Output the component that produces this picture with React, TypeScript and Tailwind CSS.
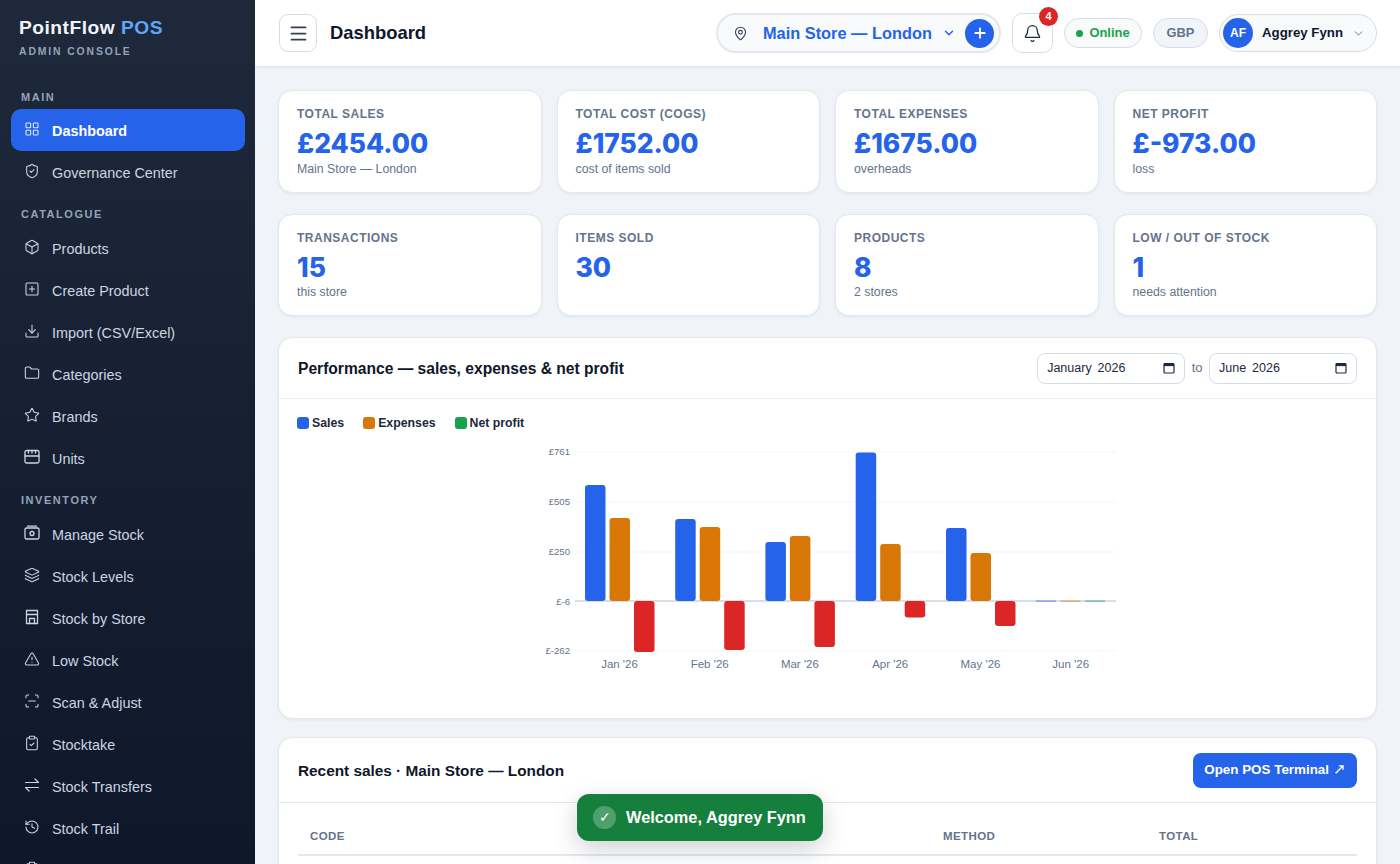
import {
  Bell,
  Box,
  ChevronDown,
  ClipboardCheck,
  Download,
  Folder,
  History,
  Layers,
  LayoutGrid,
  Menu,
  MapPin,
  Plus,
  ScanLine,
  ShieldCheck,
  SquarePlus,
  Star,
  TriangleAlert,
} from "lucide-react";
import type { ReactNode } from "react";

const ic = { size: 18, strokeWidth: 1.6 };

function UnitsIcon() {
  return (
    <svg width="16" height="16" viewBox="0 0 16 16" fill="none" stroke="currentColor" strokeWidth="1.3" strokeLinecap="round">
      <rect x="1" y="1.5" width="14" height="12.5" rx="1.5" />
      <path d="M1 7h14M4.5 1.5v2.5M8 1.5v2.5M11.5 1.5v2.5" />
    </svg>
  );
}

function CashIcon() {
  return (
    <svg width="16" height="16" viewBox="0 0 16 16" fill="none" stroke="currentColor" strokeWidth="1.3" strokeLinecap="round">
      <rect x="1" y="3" width="14" height="11" rx="1.5" />
      <circle cx="8" cy="8.5" r="2" />
      <path d="M3.5 1.2h9" />
    </svg>
  );
}

function StoreIcon() {
  return (
    <svg width="16" height="16" viewBox="0 0 16 16" fill="none" stroke="currentColor" strokeWidth="1.3" strokeLinecap="round" strokeLinejoin="round">
      <path d="M2.5 1.5h11v13h-11z" />
      <path d="M2.5 5.5h11M5.5 14.5V9.5h5v5" />
    </svg>
  );
}

function TransferIcon() {
  return (
    <svg width="16" height="16" viewBox="0 0 16 16" fill="none" stroke="currentColor" strokeWidth="1.2" strokeLinecap="round" strokeLinejoin="round">
      <path d="M1.5 5.5h13L11 2" />
      <path d="M14.5 10.5h-13L5 14" />
    </svg>
  );
}

function CalendarIcon() {
  return (
    <svg width="12" height="12" viewBox="0 0 12 12" fill="none">
      <rect x="1" y="1.5" width="10" height="9.5" rx="1" stroke="#1e293b" strokeWidth="1.2" />
      <rect x="1" y="1.5" width="10" height="2.6" fill="#1e293b" />
    </svg>
  );
}

type Item = { label: string; icon: ReactNode; active?: boolean };

const sections: { title: string; first?: boolean; items: Item[] }[] = [
  {
    title: "MAIN",
    first: true,
    items: [
      { label: "Dashboard", icon: <LayoutGrid {...ic} />, active: true },
      { label: "Governance Center", icon: <ShieldCheck {...ic} /> },
    ],
  },
  {
    title: "CATALOGUE",
    items: [
      { label: "Products", icon: <Box {...ic} /> },
      { label: "Create Product", icon: <SquarePlus {...ic} /> },
      { label: "Import (CSV/Excel)", icon: <Download {...ic} /> },
      { label: "Categories", icon: <Folder {...ic} /> },
      { label: "Brands", icon: <Star {...ic} /> },
      { label: "Units", icon: <UnitsIcon /> },
    ],
  },
  {
    title: "INVENTORY",
    items: [
      { label: "Manage Stock", icon: <CashIcon /> },
      { label: "Stock Levels", icon: <Layers {...ic} /> },
      { label: "Stock by Store", icon: <StoreIcon /> },
      { label: "Low Stock", icon: <TriangleAlert {...ic} /> },
      { label: "Scan & Adjust", icon: <ScanLine {...ic} /> },
      { label: "Stocktake", icon: <ClipboardCheck {...ic} /> },
      { label: "Stock Transfers", icon: <TransferIcon /> },
      { label: "Stock Trail", icon: <History {...ic} /> },
    ],
  },
];

const statsTop = [
  { label: "TOTAL SALES", value: "£2454.00", sub: "Main Store — London" },
  { label: "TOTAL COST (COGS)", value: "£1752.00", sub: "cost of items sold" },
  { label: "TOTAL EXPENSES", value: "£1675.00", sub: "overheads" },
  { label: "NET PROFIT", value: "£-973.00", sub: "loss" },
];

const statsBottom = [
  { label: "TRANSACTIONS", value: "15", sub: "this store" },
  { label: "ITEMS SOLD", value: "30", sub: "" },
  { label: "PRODUCTS", value: "8", sub: "2 stores" },
  { label: "LOW / OUT OF STOCK", value: "1", sub: "needs attention" },
];

// svg is placed so x = page x - 540, y = page y - 440
const bars = [
  { month: "Jan '26", cx: 79.5, sales: 485, exp: 518, net: 652 },
  { month: "Feb '26", cx: 169.7, sales: 519, exp: 527, net: 650 },
  { month: "Mar '26", cx: 259.9, sales: 542, exp: 536, net: 647 },
  { month: "Apr '26", cx: 350.2, sales: 452.5, exp: 544, net: 617.5 },
  { month: "May '26", cx: 440.5, sales: 528, exp: 553, net: 626 },
];

const ticks = [
  { y: 452, label: "£761" },
  { y: 502, label: "£505" },
  { y: 552, label: "£250" },
  { y: 651, label: "£-262" },
];

function Chart() {
  return (
    <svg width="580" height="240" viewBox="0 0 580 240" className="block" fontFamily="'Liberation Sans', sans-serif">
      {ticks.map((t) => (
        <g key={t.label}>
          <line x1="35" x2="576" y1={t.y - 440} y2={t.y - 440} stroke="#f1f5f9" strokeWidth="1" />
          <text x="30" y={t.y - 437} textAnchor="end" fontSize="9.6" fill="#64748b">
            {t.label}
          </text>
        </g>
      ))}
      <line x1="35" x2="576" y1="161" y2="161" stroke="#cbd5e1" strokeWidth="1.5" />
      <text x="30" y="164.5" textAnchor="end" fontSize="9.6" fill="#64748b">
        £-6
      </text>
      {bars.map((b) => (
        <g key={b.month}>
          <rect x={b.cx - 34.5} y={b.sales - 440} width="20.5" height={601 - b.sales} rx="3" fill="#2563eb" />
          <rect x={b.cx - 10} y={b.exp - 440} width="20.5" height={601 - b.exp} rx="3" fill="#d97706" />
          <rect x={b.cx + 14.5} y="161" width="20.5" height={b.net - 601} rx="3" fill="#dc2626" />
          <text x={b.cx} y="228" textAnchor="middle" fontSize="11.5" fill="#64748b">
            {b.month}
          </text>
        </g>
      ))}
      <rect x="496" y="160.5" width="20" height="1.2" fill="#2563eb" opacity="0.6" />
      <rect x="520.5" y="160.5" width="20" height="1.2" fill="#d97706" opacity="0.6" />
      <rect x="545" y="160.5" width="20" height="1.2" fill="#16a34a" opacity="0.6" />
      <text x="530.7" y="228" textAnchor="middle" fontSize="11.5" fill="#64748b">
        Jun '26
      </text>
    </svg>
  );
}

function StatCard({ label, value, sub, tight }: { label: string; value: string; sub: string; tight?: boolean }) {
  return (
    <div className={`rounded-[14px] border border-[#e2e8f0] bg-white px-[18px] pt-[15px] shadow-[0_1px_3px_rgba(15,23,42,0.06)] ${tight ? "pb-[15px]" : "pb-[15px]"}`}>
      <div className="text-[12px] leading-4 font-bold tracking-[0.5px] text-[#64748b]">{label}</div>
      <div className="mt-[3px] text-[26.4px] leading-[36px] font-extrabold text-[#2563eb] font-['Inter',sans-serif]">{value}</div>
      {sub && <div className={`text-[12.3px] leading-4 text-[#64748b] ${tight ? "-mt-px" : "mt-0"}`}>{sub}</div>}
    </div>
  );
}

function Sidebar() {
  return (
    <aside className="h-full w-[255px] shrink-0 overflow-hidden bg-gradient-to-b from-[#1e293b] to-[#0f172a]">
      <div className="px-[19px] pt-[17px]">
        <div className="text-[19.2px] leading-[22px] font-bold tracking-[0.5px] text-[#f1f5f9]">
          PointFlow <span className="text-[#60a5fa]">POS</span>
        </div>
        <div className="mt-[6px] text-[10.4px] leading-[14px] font-bold tracking-[0.18em] text-[#94a3b8]">ADMIN CONSOLE</div>
      </div>
      <nav className="pt-[31px] pr-[10px] pl-[11px]">
        {sections.map((s) => (
          <div key={s.title}>
            <div className={`px-2.5 text-[11px] leading-[14px] font-bold tracking-[0.14em] text-[#94a3b8] ${s.first ? "pb-[5px]" : "pt-[14px] pb-1.5"}`}>
              {s.title}
            </div>
            {s.items.map((i) => (
              <div
                key={i.label}
                className={`flex h-[42px] items-center gap-3 rounded-[10px] pl-[13px] text-[14.4px] ${i.active ? "bg-[#2563eb] font-bold text-white" : "text-[#cbd5e1]"}`}
              >
                <span className={`flex w-4 justify-center ${i.active ? "text-[#dbeafe]" : "text-[#cbd5e1]"} -translate-y-px`}>{i.icon}</span>
                <span className="pt-[3px]">{i.label}</span>
              </div>
            ))}
          </div>
        ))}
        <div className="flex h-[42px] items-center pl-[13px] text-[#cbd5e1]">
          <span className="flex w-4 justify-center -translate-y-px">
            <ClipboardCheck {...ic} />
          </span>
        </div>
      </nav>
    </aside>
  );
}

function Header() {
  return (
    <header className="flex h-[67px] shrink-0 items-center justify-between border-b border-[#e2e8f0] bg-white px-[23px] shadow-[0_1px_3px_rgba(15,23,42,0.04)]">
      <div className="ml-px flex items-center gap-[13px]">
        <button className="flex h-[38px] w-[38px] items-center justify-center rounded-[9px] border border-[#d5dde8] text-[#334155]">
          <Menu size={21} strokeWidth={2} />
        </button>
        <div className="text-[18.4px] font-bold text-[#0f172a]">Dashboard</div>
      </div>
      <div className="flex items-center gap-[11px]">
        <div className="flex h-10 w-[285px] items-center rounded-full border-2 border-[#e2e8f0] bg-[#f8fafc] pr-[5px] pl-[15px]">
          <MapPin size={15} strokeWidth={1.75} className="text-[#334155]" />
          <span className="ml-[15px] text-[16.35px] font-bold whitespace-nowrap text-[#2563eb]">Main Store — London</span>
          <ChevronDown size={14} strokeWidth={2.5} className="ml-[10px] text-[#2563eb]" />
          <span className="ml-auto flex h-[29px] w-[29px] items-center justify-center rounded-full bg-[#2563eb] text-white">
            <Plus size={16} strokeWidth={2.75} />
          </span>
        </div>
        <div className="relative flex h-10 w-[41px] items-center justify-center rounded-[10px] border border-[#d5dde8] bg-white text-[#1e293b]">
          <Bell size={19} strokeWidth={1.6} />
          <span className="absolute -top-[7px] -right-[6px] flex h-[19px] w-[19px] items-center justify-center rounded-full bg-[#dc2626] text-[11px] font-bold text-white">4</span>
        </div>
        <div className="flex h-[30px] w-[78px] items-center justify-center gap-[6px] rounded-full border border-[#d5dde8] bg-[#f8fafc] text-[12.9px] font-bold text-[#16a34a]">
          <span className="h-[7px] w-[7px] rounded-full bg-[#16a34a]" />
          Online
        </div>
        <div className="flex h-[30px] w-[55px] items-center justify-center rounded-full border border-[#d5dde8] bg-[#f1f5f9] text-[12.9px] font-bold text-[#64748b]">GBP</div>
        <div className="flex h-[38px] w-[158px] items-center rounded-full border border-[#d5dde8] bg-[#f8fafc] pl-[3px]">
          <span className="flex h-[30px] w-[30px] items-center justify-center rounded-full bg-[#2563eb] text-[12px] font-bold text-white">AF</span>
          <span className="ml-[9px] text-[13.25px] font-bold text-[#0f172a]">Aggrey Fynn</span>
          <ChevronDown size={13} strokeWidth={1.75} className="ml-[9px] text-[#64748b]" />
        </div>
      </div>
    </header>
  );
}

function MonthField({ month }: { month: string }) {
  return (
    <div className="flex h-[31px] w-[148px] items-center justify-between rounded-lg border border-[#d5dde8] bg-white px-[9px] text-[12.5px] text-[#1e293b]">
      <span className="[word-spacing:2.5px]">{month}</span>
      <CalendarIcon />
    </div>
  );
}

export default function App() {
  return (
    <div className="relative flex h-screen overflow-hidden bg-[#f0f4f9] font-['Liberation_Sans',Arial,sans-serif]">
      <Sidebar />
      <main className="flex min-w-0 flex-1 flex-col overflow-hidden">
        <Header />
        <div className="flex flex-col gap-[21px] px-[23px] pt-[23px]">
          <div className="grid grid-cols-4 gap-[15px]">
            {statsTop.map((s) => (
              <StatCard key={s.label} {...s} />
            ))}
          </div>
          <div className="grid grid-cols-4 gap-[15px]">
            {statsBottom.map((s) => (
              <StatCard key={s.label} {...s} tight />
            ))}
          </div>
          <section className="-mb-[3px] rounded-[14px] border border-[#e2e8f0] bg-white shadow-[0_1px_3px_rgba(15,23,42,0.06)]">
            <div className="flex h-[61px] items-center justify-between border-b border-[#eef2f7] px-[19px]">
              <h2 className="pt-0.5 text-[15.6px] font-bold text-[#0f172a]">Performance — sales, expenses &amp; net profit</h2>
              <div className="flex items-center gap-[6.5px] text-[13px] text-[#64748b]">
                <MonthField month="January 2026" />
                <span>to</span>
                <MonthField month="June 2026" />
              </div>
            </div>
            <div className="h-[319px] pt-[15px]">
              <div className="flex gap-[19px] pl-[18px] text-[12.3px] font-bold text-[#1e293b]">
                <span className="flex items-center gap-[3px]"><i className="h-3 w-3 rounded-[3px] bg-[#2563eb]" />Sales</span>
                <span className="flex items-center gap-[3px]"><i className="h-3 w-3 rounded-[3px] bg-[#d97706]" />Expenses</span>
                <span className="flex items-center gap-[3px]"><i className="h-3 w-3 rounded-[3px] bg-[#16a34a]" />Net profit</span>
              </div>
              <div className="flex justify-center pt-2 pl-1">
                <Chart />
              </div>
            </div>
          </section>
          <section className="h-[200px] rounded-[14px] border border-[#e2e8f0] bg-white shadow-[0_1px_3px_rgba(15,23,42,0.06)]">
            <div className="flex h-[65px] items-center justify-between border-b border-[#e2e8f0] px-[19px]">
              <h2 className="pt-0.5 text-[15.35px] font-bold text-[#0f172a]">Recent sales · Main Store — London</h2>
              <button className="h-[35px] w-[164px] rounded-lg bg-[#2563eb] text-[13.4px] font-bold text-white">
                Open POS Terminal <span className="text-[15px] leading-none font-normal">↗</span>
              </button>
            </div>
            <div className="px-[19px] pt-[25px]">
              <div className="grid grid-cols-[633px_216px_1fr] border-b-2 border-[#e2e8f0] px-3 pb-[10px] text-[11.5px] leading-4 font-bold tracking-[0.4px] text-[#64748b]">
                <span>CODE</span>
                <span>METHOD</span>
                <span>TOTAL</span>
              </div>
            </div>
          </section>
        </div>
      </main>
      <div className="absolute top-[794px] left-[577px] flex h-[47px] w-[246px] items-center gap-[10px] rounded-xl bg-[#15803d] pl-4 text-[16.35px] font-bold text-white shadow-[0_8px_24px_rgba(15,23,42,0.2)]">
        <span className="flex h-[23px] w-[23px] items-center justify-center rounded-full bg-white/25 text-[14px] font-normal">✓</span>
        Welcome, Aggrey Fynn
      </div>
    </div>
  );
}
